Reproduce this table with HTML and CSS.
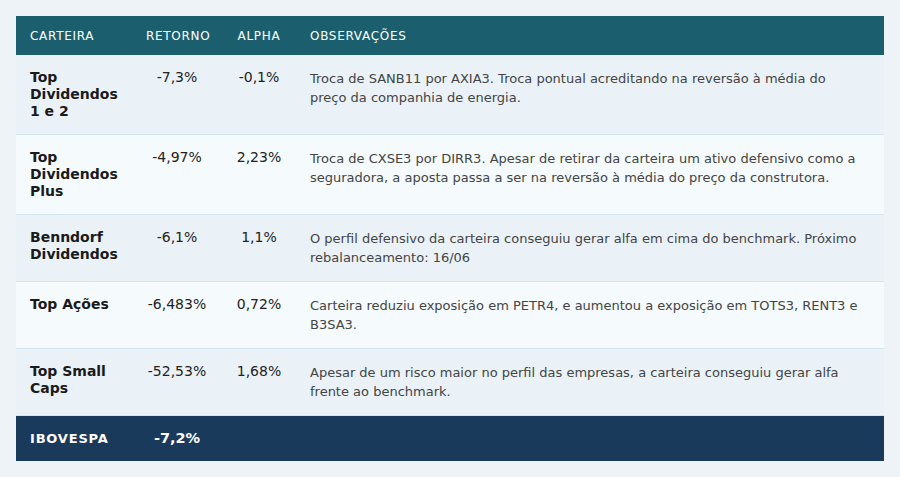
FILE: index.html
```html
<!DOCTYPE html>
<html lang="pt">
<head>
<meta charset="utf-8">
<link rel="stylesheet" href="styles.css">
</head>
<body>
<table class="perf">
  <colgroup>
    <col class="c-name"><col class="c-ret"><col class="c-alpha"><col class="c-obs">
  </colgroup>
  <thead>
    <tr>
      <th class="left">Carteira</th>
      <th>Retorno</th>
      <th>Alpha</th>
      <th class="left">Observações</th>
    </tr>
  </thead>
  <tbody>
    <tr class="odd">
      <td class="name">Top<br>Dividendos<br>1 e 2</td>
      <td class="num">-7,3%</td>
      <td class="num">-0,1%</td>
      <td class="obs">Troca de SANB11 por AXIA3. Troca pontual acreditando na reversão à média do preço da companhia de energia.</td>
    </tr>
    <tr class="even">
      <td class="name">Top<br>Dividendos<br>Plus</td>
      <td class="num">-4,97%</td>
      <td class="num">2,23%</td>
      <td class="obs">Troca de CXSE3 por DIRR3. Apesar de retirar da carteira um ativo defensivo como a seguradora, a aposta passa a ser na reversão à média do preço da construtora.</td>
    </tr>
    <tr class="odd">
      <td class="name">Benndorf<br>Dividendos</td>
      <td class="num">-6,1%</td>
      <td class="num">1,1%</td>
      <td class="obs">O perfil defensivo da carteira conseguiu gerar alfa em cima do benchmark. Próximo rebalanceamento: 16/06</td>
    </tr>
    <tr class="even">
      <td class="name">Top Ações</td>
      <td class="num">-6,483%</td>
      <td class="num">0,72%</td>
      <td class="obs">Carteira reduziu exposição em PETR4, e aumentou a exposição em TOTS3, RENT3 e B3SA3.</td>
    </tr>
    <tr class="odd">
      <td class="name">Top Small<br>Caps</td>
      <td class="num">-52,53%</td>
      <td class="num">1,68%</td>
      <td class="obs">Apesar de um risco maior no perfil das empresas, a carteira conseguiu gerar alfa frente ao benchmark.</td>
    </tr>
  </tbody>
  <tfoot>
    <tr>
      <td class="bench">IBOVESPA</td>
      <td class="bench-num">-7,2%</td>
      <td></td>
      <td></td>
    </tr>
  </tfoot>
</table>
</body>
</html>
```

FILE: styles.css
```css
html, body {
  margin: 0;
  padding: 0;
  background: #eef3f7;
}
body {
  padding: 16px;
  font-family: "DejaVu Sans", sans-serif;
}
.perf {
  width: 868px;
  border-collapse: collapse;
  table-layout: fixed;
}
.c-name { width: 116px; }
.c-ret { width: 90px; }
.c-alpha { width: 74px; }
.c-obs { width: 588px; }

.perf th {
  background: #1b5f6e;
  color: #ffffff;
  font-weight: normal;
  font-size: 12px;
  letter-spacing: 0.7px;
  text-transform: uppercase;
  text-align: center;
  height: 39px;
  padding: 0 14px;
  box-sizing: border-box;
  vertical-align: middle;
}
.perf th.left { text-align: left; }

.perf td {
  padding: 14px 14px;
  vertical-align: top;
}
.perf tbody tr { border-bottom: 1px solid #d3e6ee; }
.odd td { background: #eaf2f8; }
.even td { background: #f5fafc; }

.name {
  font-weight: bold;
  font-size: 14px;
  line-height: 17px;
  color: #1a1a1a;
}
.num {
  text-align: center;
  font-size: 14px;
  line-height: 17px;
  color: #222;
}
.perf td.obs {
  padding-right: 22px;
  font-size: 13px;
  line-height: 19px;
  color: #444;
}
.perf tfoot td {
  background: #1a3a5c;
  color: #ffffff;
  font-weight: bold;
  height: 45px;
  box-sizing: border-box;
  padding: 0 14px;
  vertical-align: middle;
}
.bench {
  font-size: 13px;
  letter-spacing: 0.8px;
}
.bench-num {
  text-align: center;
  font-size: 14.5px;
}
```
